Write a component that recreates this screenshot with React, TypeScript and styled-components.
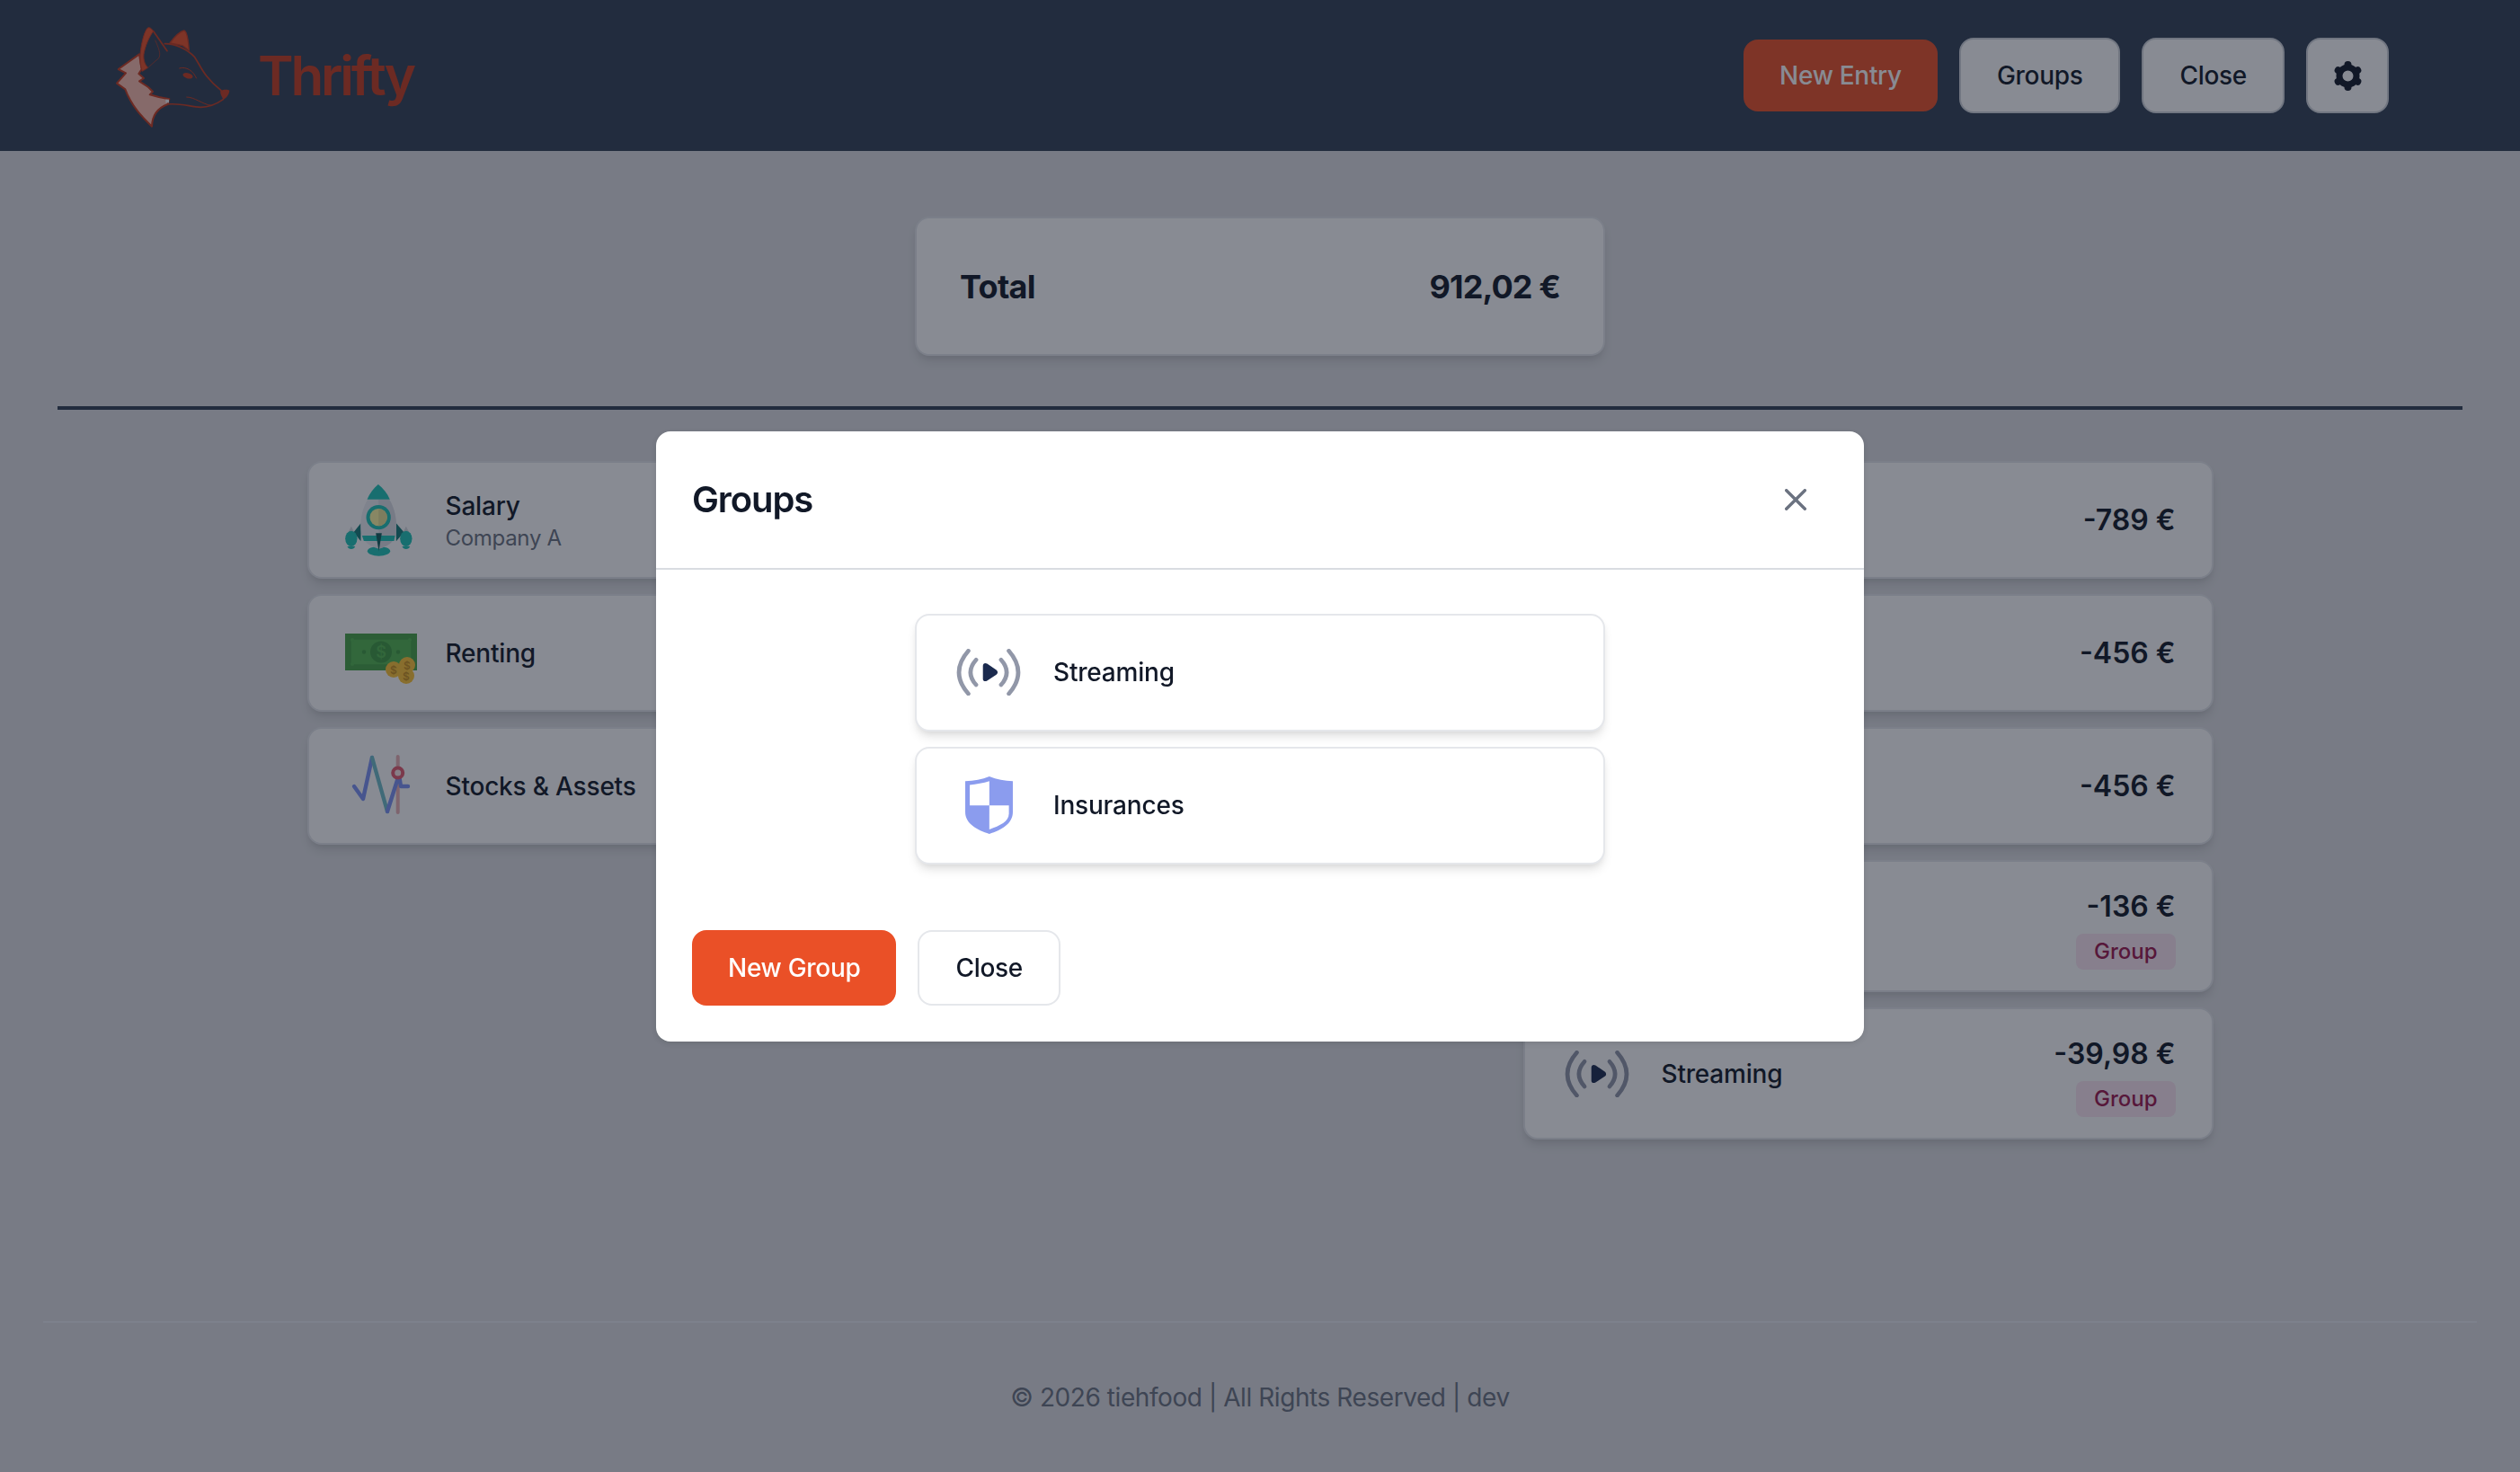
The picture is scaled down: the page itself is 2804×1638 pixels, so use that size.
import { createGlobalStyle, styled } from "styled-components";

const GlobalStyle = createGlobalStyle`
  * {
    box-sizing: border-box;
  }
  html, body {
    margin: 0;
    padding: 0;
    background: #dedfe2;
    font-family: Inter, "Liberation Sans", sans-serif;
    color: #111827;
  }
`;

const Page = styled.div`
  min-height: 1638px;
  display: flex;
  flex-direction: column;
`;

const Navbar = styled.nav`
  height: 168px;
  flex-shrink: 0;
  display: flex;
  align-items: center;
  justify-content: space-between;
  padding: 0 146px 0 120px;
  background: #334155;
`;

const Brand = styled.div`
  display: flex;
  align-items: center;
  gap: 22px;
`;

const BrandName = styled.span`
  font-size: 60px;
  font-weight: 600;
  line-height: 72px;
  letter-spacing: -3.2px;
  color: #c63c1e;
`;

const NavActions = styled.div`
  display: flex;
  align-items: center;
  gap: 24px;
`;

const Button = styled.button<{ $primary?: boolean; $light?: boolean }>`
  height: ${(p) => (p.$primary ? "80px" : "84px")};
  padding: 0 40px;
  display: flex;
  align-items: center;
  justify-content: center;
  border-radius: 16px;
  border: ${(p) => (p.$primary ? "0" : `2px solid ${p.$light ? "#e5e7eb" : "#d1d5db"}`)};
  background: ${(p) => (p.$primary ? "#ea5027" : "#fff")};
  color: ${(p) => (p.$primary ? "#fff" : "#111827")};
  font-family: inherit;
  font-size: 28px;
  font-weight: 500;
  line-height: 40px;
  letter-spacing: -0.3px;
`;

const ModalButton = styled(Button)`
  height: 84px;
`;

const GearButton = styled(Button)`
  width: 92px;
  padding: 0;
`;

const Main = styled.main`
  display: flex;
  flex-direction: column;
  padding-top: 73px;
`;

const Card = styled.div`
  width: 768px;
  display: flex;
  align-items: center;
  justify-content: space-between;
  background: #fff;
  border: 2px solid #e5e7eb;
  border-radius: 16px;
  box-shadow: 0 8px 12px -2px rgba(0, 0, 0, 0.1), 0 4px 8px -4px rgba(0, 0, 0, 0.1);
`;

const TotalCard = styled(Card)`
  align-self: center;
  height: 155px;
  padding: 0 48px;
`;

const TotalLabel = styled.span`
  font-size: 36px;
  font-weight: 700;
  line-height: 56px;
  letter-spacing: -0.7px;
`;

const TotalValue = styled.span`
  font-size: 36px;
  font-weight: 700;
  line-height: 56px;
  letter-spacing: -0.9px;
`;

const Rule = styled.hr`
  margin: 56px 64px 57px;
  height: 4px;
  border: 0;
  background: #334155;
`;

const Columns = styled.div`
  width: 2121px;
  margin: 0 auto;
  display: flex;
  justify-content: space-between;
  align-items: flex-start;
`;

const Column = styled.div`
  display: flex;
  flex-direction: column;
  gap: 17px;
`;

const EntryCard = styled(Card)`
  padding: 23.5px 40px;
`;

const EntryInfo = styled.div`
  display: flex;
  align-items: center;
  gap: 32px;
`;

const IconBox = styled.div`
  width: 80px;
  height: 80px;
  flex-shrink: 0;
  display: flex;
  align-items: center;
  justify-content: flex-start;
`;

const CenteredIcon = styled(IconBox)`
  justify-content: center;
`;

const EntryText = styled.div`
  display: flex;
  flex-direction: column;
`;

const EntryName = styled.span`
  font-size: 28px;
  font-weight: 500;
  line-height: 40px;
  letter-spacing: -0.2px;
`;

const EntrySub = styled.span`
  font-size: 24px;
  line-height: 32px;
  letter-spacing: -0.3px;
  color: #6b7280;
`;

const EntryAmount = styled.div`
  display: flex;
  flex-direction: column;
  align-items: flex-end;
`;

const Amount = styled.span`
  font-size: 32px;
  font-weight: 600;
  line-height: 52px;
  white-space: nowrap;
`;

const Badge = styled.span`
  height: 40px;
  margin-top: 4px;
  padding: 0 20px;
  display: flex;
  align-items: center;
  border-radius: 8px;
  background: #fce7f3;
  color: #9d174d;
  font-size: 24px;
  font-weight: 500;
`;

const Footer = styled.footer`
  margin: auto 48px 0;
  padding: 63px 0;
  border-top: 2px solid #e8eaf0;
  text-align: center;
  font-size: 28px;
  line-height: 40px;
  letter-spacing: -0.43px;
  color: #6b7280;
`;

const Overlay = styled.div`
  position: fixed;
  inset: 0;
  display: flex;
  align-items: center;
  justify-content: center;
  background: rgba(17, 24, 39, 0.5);
`;

const Modal = styled.div`
  width: 1344px;
  background: #fff;
  border-radius: 16px;
  box-shadow: 0 2px 6px rgba(0, 0, 0, 0.1);
`;

const ModalHeader = styled.div`
  display: flex;
  align-items: center;
  justify-content: space-between;
  padding: 40px;
  border-bottom: 2px solid #d9dce1;
`;

const ModalTitle = styled.h3`
  margin: 0;
  font-size: 40px;
  font-weight: 600;
  line-height: 56px;
  letter-spacing: -1.1px;
`;

const CloseIcon = styled.button`
  width: 72px;
  height: 72px;
  display: flex;
  align-items: center;
  justify-content: center;
  padding: 0;
  border: 0;
  background: transparent;
  color: #6b7280;
`;

const ModalBody = styled.div`
  display: flex;
  flex-direction: column;
  align-items: center;
  gap: 17px;
  padding: 49px 40px 33px;
`;

const ModalFooter = styled.div`
  display: flex;
  gap: 24px;
  padding: 40px;
`;

function FoxLogo() {
  return (
    <svg width="145" height="125" viewBox="0 0 435 375" fill="none">
      <path
        d="M105 115 L35 165 L60 178 L30 212 L58 232 C80 290 115 325 147 356 C148 320 165 295 200 282 L205 265 L170 258 L140 250 L150 240 L135 225 L105 205 L120 195 L103 180 L113 165 Z"
        fill="#fbbcac"
        stroke="#c63c1e"
        strokeWidth="6"
        strokeLinejoin="round"
      />
      <path
        d="M110 100 C114 70 122 40 132 28 C140 22 148 32 152 38 C136 60 124 90 120 115 C118 135 124 150 134 160 L115 172 C106 150 106 125 110 100 Z"
        fill="#ea5027"
        stroke="#c63c1e"
        strokeWidth="3"
      />
      <path d="M152 38 L198 104" stroke="#c63c1e" strokeWidth="5" strokeLinecap="round" />
      <path d="M158 68 C170 95 178 115 170 128 L136 158" stroke="#c63c1e" strokeWidth="2" />
      <path
        d="M207 78 C222 58 238 40 254 36 C264 38 268 60 271 102 L250 86 Z"
        fill="#ea5027"
        stroke="#c63c1e"
        strokeWidth="4"
        strokeLinejoin="round"
      />
      <path
        d="M190 80 C225 80 265 98 290 125 C310 155 320 190 378 236"
        stroke="#c63c1e"
        strokeWidth="5"
        strokeLinecap="round"
      />
      <path
        d="M376 237 C388 232 400 232 406 236 C405 250 395 262 385 266 C380 255 374 247 376 237 Z"
        fill="#c63c1e"
      />
      <path
        d="M385 266 C362 282 335 292 310 292 C275 290 240 278 200 282"
        stroke="#c63c1e"
        strokeWidth="5"
        strokeLinecap="round"
      />
      <path d="M262 258 C290 258 315 282 345 286" stroke="#c63c1e" strokeWidth="3" />
      <path d="M238 162 C262 155 285 170 296 196" stroke="#c63c1e" strokeWidth="3" />
      <ellipse cx="267" cy="187" rx="17" ry="9" transform="rotate(15 267 187)" fill="#c63c1e" />
      <rect x="193" y="266" width="11" height="11" fill="#f4f5f7" />
    </svg>
  );
}

function GearIcon() {
  const lobes = [0, 60, 120, 180, 240, 300];
  return (
    <svg width="33" height="33" viewBox="0 0 33 33" fill="#111827">
      {lobes.map((deg) => (
        <circle key={deg} cx="16.5" cy="4" r="4" transform={`rotate(${deg} 16.5 16.5)`} />
      ))}
      <circle cx="16.5" cy="16.5" r="9.5" fill="none" stroke="#111827" strokeWidth="7" />
    </svg>
  );
}

function RocketIcon() {
  return (
    <svg width="75" height="80" viewBox="38 25 224 240">
      <path d="M90 155 L66 185 L90 215 Z" fill="#157c78" />
      <path d="M208 155 L234 185 L208 215 Z" fill="#157c78" />
      <path d="M58 165 L48 185 H68 Z" fill="#d8dade" />
      <path d="M241 165 L231 185 H251 Z" fill="#d8dade" />
      <ellipse cx="58" cy="206" rx="20" ry="26" fill="#1fc4b6" />
      <ellipse cx="241" cy="206" rx="20" ry="26" fill="#1fc4b6" />
      <path d="M45 232 H71 C68 244 48 244 45 232 Z" fill="#1fc4b6" />
      <path d="M228 232 H254 C251 244 231 244 228 232 Z" fill="#1fc4b6" />
      <ellipse cx="150" cy="248" rx="38" ry="16" fill="#1fc4b6" />
      <path
        d="M113 75 C95 105 88 140 90 175 C92 205 105 228 150 240 C195 228 208 205 208 175 C210 140 203 105 185 75 Z"
        fill="#eceef2"
      />
      <path
        d="M149 75 H185 C203 105 210 140 208 175 C208 205 195 228 150 240 Z"
        fill="#dcdfe5"
      />
      <path d="M148 25 C165 38 178 55 187 75 H111 C120 55 132 38 148 25 Z" fill="#1fc4b6" />
      <path d="M94 196 H204 L201 214 H100 Z" fill="#1fc4b6" />
      <circle cx="149" cy="135" r="41" fill="#1fc4b6" />
      <circle cx="149" cy="135" r="29" fill="#fff7a0" />
      <path d="M149 106 A29 29 0 0 1 149 164 Z" fill="#e9e394" />
      <path d="M140 188 H160 L150 248 Z" fill="#115f5c" />
    </svg>
  );
}

function MoneyIcon() {
  return (
    <svg width="80" height="80" viewBox="0 -18 80 80">
      <rect x="0" y="0" width="80" height="41" fill="#46a244" />
      <rect x="6" y="6" width="68" height="29" fill="#52b64f" stroke="#46a244" strokeWidth="1.5" />
      <circle cx="40" cy="20.5" r="12" fill="#3f9a40" />
      <text x="40" y="27" textAnchor="middle" fontSize="18" fontWeight="600" fill="#52b64f" fontFamily="Inter, sans-serif">$</text>
      <circle cx="21" cy="20.5" r="2.2" fill="#3f9a40" />
      <circle cx="59" cy="20.5" r="2.2" fill="#3f9a40" />
      <circle cx="8" cy="7" r="2" fill="#52b64f" />
      <circle cx="72" cy="7" r="2" fill="#52b64f" />
      <circle cx="8" cy="34" r="2" fill="#52b64f" />
      <circle cx="72" cy="34" r="2" fill="#52b64f" />
      <circle cx="69" cy="35" r="9" fill="#ffc534" />
      <circle cx="54" cy="40" r="9" fill="#ffc534" />
      <circle cx="68" cy="47" r="9" fill="#ffc534" />
      <text x="69" y="40" textAnchor="middle" fontSize="12" fontWeight="600" fill="#c78f1d" fontFamily="Inter, sans-serif">$</text>
      <text x="54" y="45" textAnchor="middle" fontSize="12" fontWeight="600" fill="#c78f1d" fontFamily="Inter, sans-serif">$</text>
      <text x="68" y="52" textAnchor="middle" fontSize="12" fontWeight="600" fill="#c78f1d" fontFamily="Inter, sans-serif">$</text>
    </svg>
  );
}

function StocksIcon() {
  return (
    <svg width="80" height="80" viewBox="0 0 80 80" fill="none" strokeLinecap="round" strokeLinejoin="round">
      <path d="M58.7 7 V69" stroke="#eab1b4" strokeWidth="4" />
      <path d="M10 40 L20 54 L30 8" stroke="#7c93f5" strokeWidth="4.4" />
      <path d="M30 8 L47 68" stroke="#6fbdc8" strokeWidth="4.4" />
      <path d="M47 68 L60 27 L62 40 H70" stroke="#7c93f5" strokeWidth="4.4" />
      <circle cx="58.7" cy="25" r="5.5" fill="#fce7e7" stroke="#e45b6e" strokeWidth="4" />
    </svg>
  );
}

function StreamingIcon() {
  return (
    <svg width="72" height="52" viewBox="192 185 216 157" fill="none" strokeLinecap="round">
      <path d="M232 192 C190 240 190 288 232 336" stroke="#9197a8" strokeWidth="14" />
      <path d="M258 222 C233 250 233 278 258 306" stroke="#9197a8" strokeWidth="14" />
      <path d="M368 192 C410 240 410 288 368 336" stroke="#9197a8" strokeWidth="14" />
      <path d="M342 222 C367 250 367 278 342 306" stroke="#9197a8" strokeWidth="14" />
      <path
        d="M281 242 C281 233 289 231 295 235 L326 256 C332 260 332 268 326 272 L295 292 C289 296 281 294 281 286 Z"
        fill="#1b2a4e"
      />
    </svg>
  );
}

function ShieldIcon() {
  return (
    <svg width="53" height="64" viewBox="220 612 158 191">
      <path
        d="M300 612 C325 622 350 626 378 628 V730 C378 770 340 790 300 803 C260 790 220 770 220 730 V628 C250 626 275 622 300 612 Z"
        fill="#8b9cee"
      />
      <path d="M235 640 C258 638 280 634 300 628 V708 H235 Z" fill="#fff" />
      <path d="M300 708 H365 V735 C365 762 335 775 300 788 Z" fill="#fff" />
    </svg>
  );
}

const leftEntries = [
  { name: "Salary", sub: "Company A", icon: <RocketIcon /> },
  { name: "Renting", icon: <MoneyIcon /> },
  { name: "Stocks & Assets", icon: <StocksIcon /> },
];

const rightEntries = [
  { amount: "-789 €" },
  { amount: "-456 €" },
  { amount: "-456 €" },
  { amount: "-136 €", group: true },
  { name: "Streaming", amount: "-39,98 €", group: true, icon: <StreamingIcon /> },
];

export default function App() {
  return (
    <Page>
      <GlobalStyle />
      <Navbar>
        <Brand>
          <FoxLogo />
          <BrandName>Thrifty</BrandName>
        </Brand>
        <NavActions>
          <Button $primary>New Entry</Button>
          <Button>Groups</Button>
          <Button>Close</Button>
          <GearButton>
            <GearIcon />
          </GearButton>
        </NavActions>
      </Navbar>

      <Main>
        <TotalCard>
          <TotalLabel>Total</TotalLabel>
          <TotalValue>912,02 €</TotalValue>
        </TotalCard>
        <Rule />
        <Columns>
          <Column>
            {leftEntries.map((entry) => (
              <EntryCard key={entry.name}>
                <EntryInfo>
                  <IconBox>{entry.icon}</IconBox>
                  <EntryText>
                    <EntryName>{entry.name}</EntryName>
                    {entry.sub && <EntrySub>{entry.sub}</EntrySub>}
                  </EntryText>
                </EntryInfo>
              </EntryCard>
            ))}
          </Column>
          <Column>
            {rightEntries.map((entry, i) => (
              <EntryCard key={i}>
                <EntryInfo>
                  <CenteredIcon>{entry.icon}</CenteredIcon>
                  {entry.name && <EntryName>{entry.name}</EntryName>}
                </EntryInfo>
                <EntryAmount>
                  <Amount>{entry.amount}</Amount>
                  {entry.group && <Badge>Group</Badge>}
                </EntryAmount>
              </EntryCard>
            ))}
          </Column>
        </Columns>
      </Main>

      <Footer>© 2026 tiehfood | All Rights Reserved | dev</Footer>

      <Overlay>
        <Modal>
          <ModalHeader>
            <ModalTitle>Groups</ModalTitle>
            <CloseIcon>
              <svg width="24" height="24" viewBox="0 0 14 14" fill="none">
                <path
                  d="M1 1l6 6m0 0l6 6M7 7l6-6M7 7l-6 6"
                  stroke="currentColor"
                  strokeWidth="2"
                  strokeLinecap="round"
                  strokeLinejoin="round"
                />
              </svg>
            </CloseIcon>
          </ModalHeader>
          <ModalBody>
            <EntryCard>
              <EntryInfo>
                <CenteredIcon>
                  <StreamingIcon />
                </CenteredIcon>
                <EntryName>Streaming</EntryName>
              </EntryInfo>
            </EntryCard>
            <EntryCard>
              <EntryInfo>
                <CenteredIcon>
                  <ShieldIcon />
                </CenteredIcon>
                <EntryName>Insurances</EntryName>
              </EntryInfo>
            </EntryCard>
          </ModalBody>
          <ModalFooter>
            <ModalButton $primary>New Group</ModalButton>
            <ModalButton $light>Close</ModalButton>
          </ModalFooter>
        </Modal>
      </Overlay>
    </Page>
  );
}
